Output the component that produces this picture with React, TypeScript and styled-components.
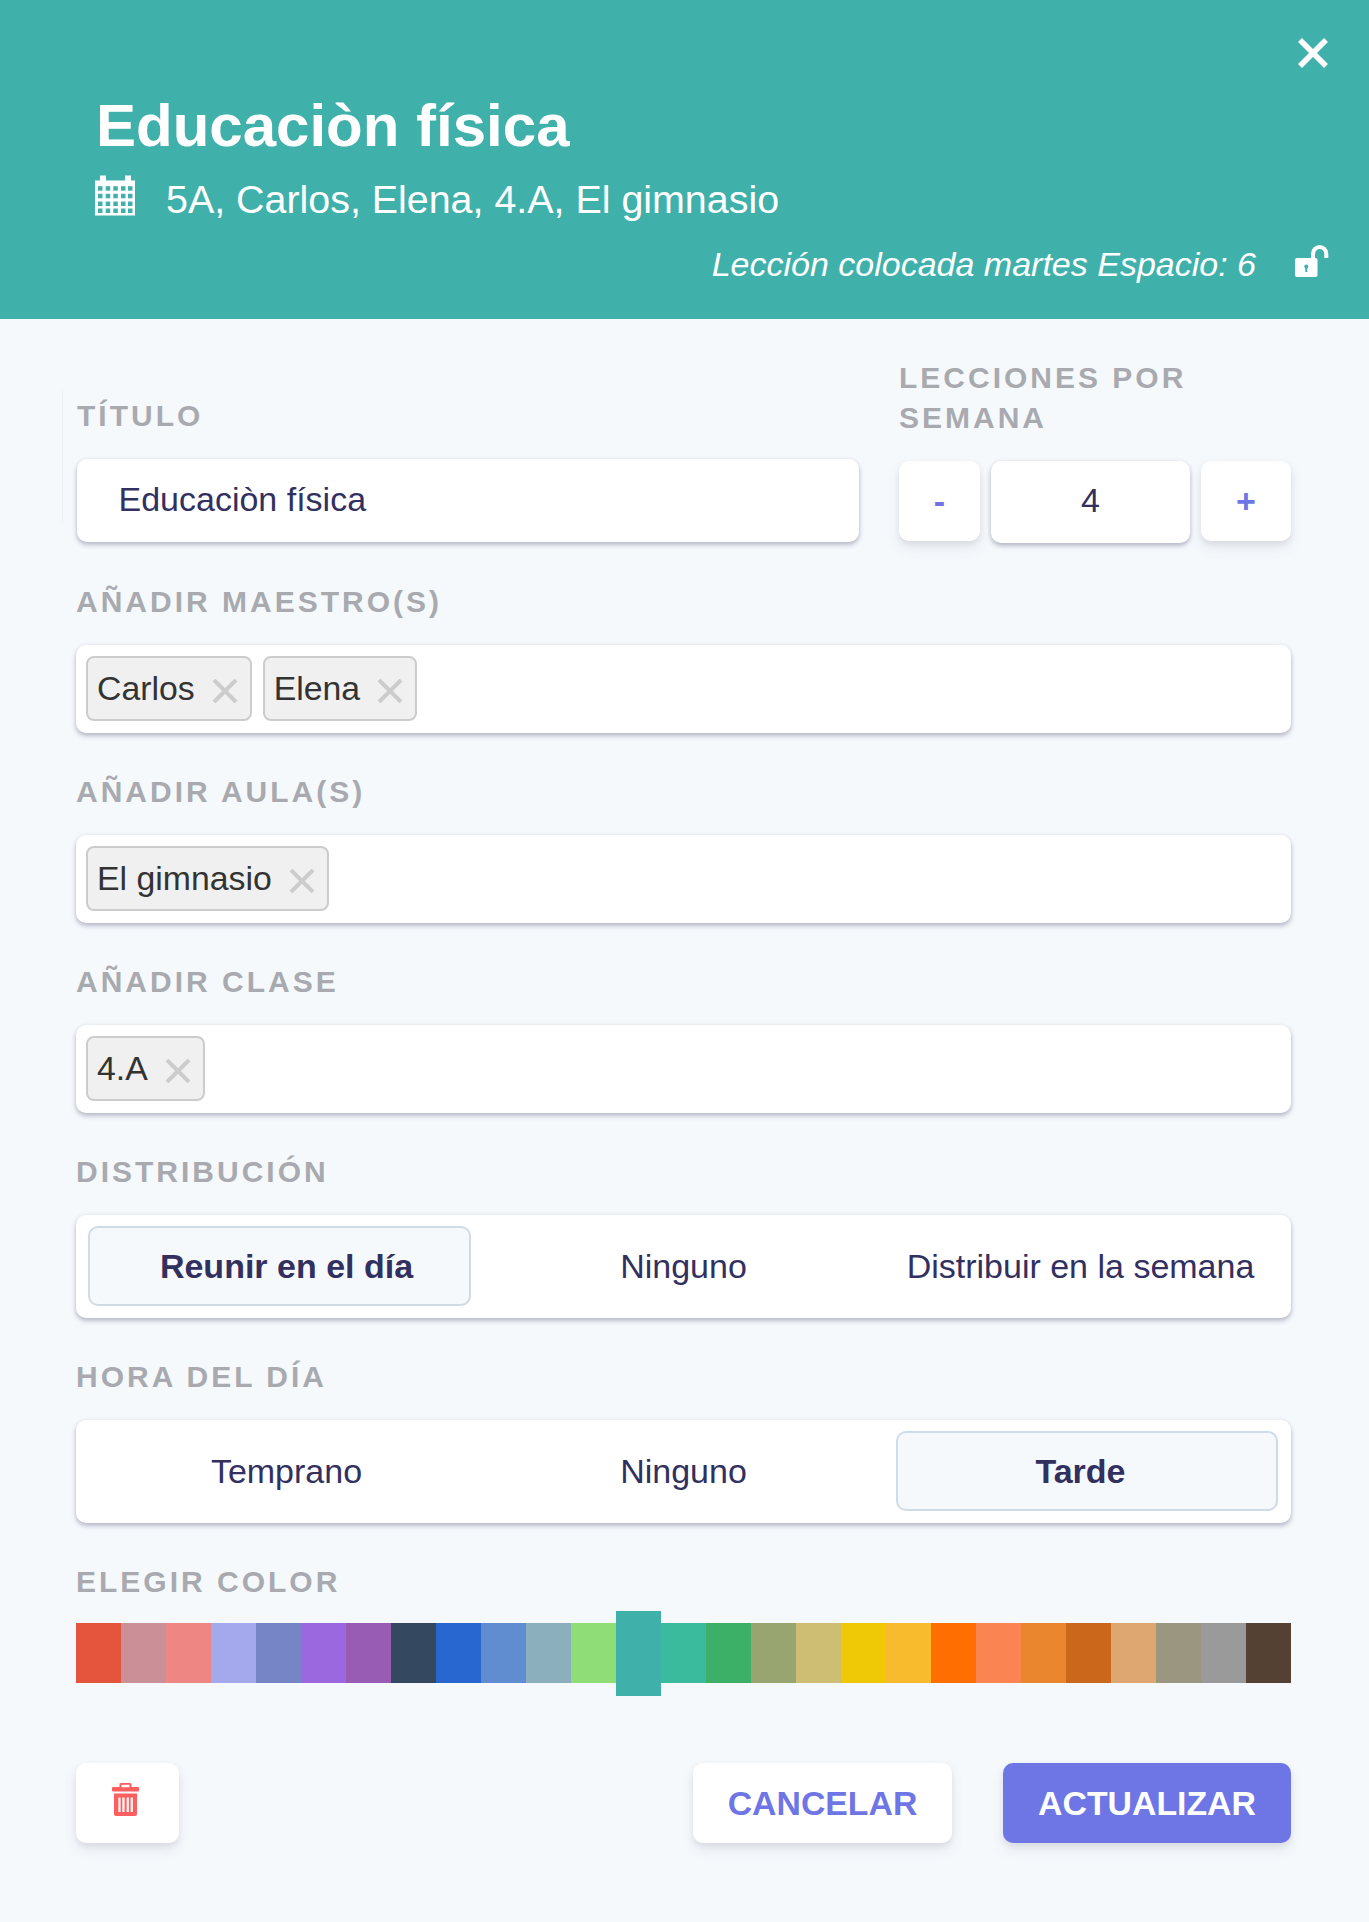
import React from "react";
import styled, { createGlobalStyle } from "styled-components";

const Global = createGlobalStyle`
  html, body { margin: 0; padding: 0; background: #f6f9fc; }
  body { font-family: "Liberation Sans", Arial, sans-serif; }
  * { box-sizing: border-box; }
`;

const softShadow = "0 7px 14px rgba(50,50,93,.09), 0 3px 6px rgba(0,0,0,.07)";
const fieldShadow = "0 3px 5px rgba(50,50,93,.3), 0 0 4px rgba(50,50,93,.08)";

const Modal = styled.div`
  width: 1369px;
  min-height: 1922px;
  background: #f6f9fc;
  color: #32305f;
`;

const Header = styled.header`
  position: relative;
  height: 319px;
  padding: 91px 40px 0 96px;
  background: #40b1aa;
  color: #fff;
`;

const CloseButton = styled.button`
  position: absolute;
  top: 38px;
  right: 40px;
  width: 32px;
  height: 30px;
  padding: 0;
  border: 0;
  background: none;
  color: #fff;
  display: block;
`;

const Title = styled.h1`
  margin: 0;
  font-size: 60px;
  font-weight: 700;
  line-height: 69px;
`;

const Subtitle = styled.div`
  margin-top: 16px;
  display: flex;
  align-items: flex-start;
  height: 46px;
  font-size: 39.4px;
  line-height: 46px;
`;

const CalendarIcon = styled.svg`
  width: 40px;
  height: 41px;
  margin: -1px 31px 0 -1px;
  flex: none;
`;

const Placed = styled.div`
  margin-top: 22px;
  display: flex;
  justify-content: flex-end;
  align-items: center;
  gap: 39px;
  height: 40px;
  font-size: 34px;
  font-style: italic;
  line-height: 40px;
`;

const LockIcon = styled.svg`
  width: 34px;
  height: 32px;
  margin-top: -6px;
  flex: none;
`;

const Body = styled.main`
  padding: 40px 78px 79px 76px;
`;

const TopRow = styled.div`
  display: flex;
  align-items: flex-start;
  gap: 40px;
  margin-bottom: 40px;
`;

const TitleField = styled.div`
  position: relative;
  width: 782px;
  margin-left: 1px;
  padding-top: 38px;

  &::before {
    content: "";
    position: absolute;
    left: -15px;
    top: 31px;
    height: 133px;
    width: 1px;
    background: #eef1f5;
  }
`;

const CountField = styled.div`
  flex: 1;
`;

const Label = styled.label<{ $gap?: number }>`
  display: block;
  margin-top: -1px;
  margin-bottom: ${(p) => (p.$gap ?? 22) + 1}px;
  font-size: 30px;
  font-weight: 700;
  line-height: 40px;
  letter-spacing: 3px;
  text-transform: uppercase;
  color: #a8aaaf;
`;

const TextInput = styled.input`
  display: block;
  width: 100%;
  height: 83px;
  padding: 0 41.5px 2px;
  border: 0;
  border-radius: 10px;
  background: #fff;
  box-shadow: ${fieldShadow};
  font: 34px "Liberation Sans", Arial, sans-serif;
  color: #32305f;
  outline: none;
`;

const Stepper = styled.div`
  display: grid;
  grid-template-columns: 81px 199px 90px;
  column-gap: 11px;
  align-items: start;
`;

const StepButton = styled.button`
  height: 80px;
  padding: 0;
  border: 0;
  border-radius: 10px;
  background: #fff;
  box-shadow: ${softShadow};
  font: 700 34px "Liberation Sans", Arial, sans-serif;
  color: #6e76e5;
`;

const CountInput = styled(TextInput)`
  height: 82px;
  padding: 0 0 3px;
  text-align: center;
`;

const Section = styled.section`
  margin-bottom: 40px;
`;

const ChipBox = styled.div`
  display: flex;
  gap: 11px;
  height: 88px;
  padding: 11px 10px;
  border-radius: 10px;
  background: #fff;
  box-shadow: ${fieldShadow};
`;

const Chip = styled.span`
  display: inline-flex;
  align-items: center;
  height: 65px;
  padding: 0 12px 0 9px;
  border: 2px solid #ccc;
  border-radius: 8px;
  background: #f0f0f0;
  font-size: 33.8px;
  color: #333;
`;

const ChipClose = styled.svg`
  width: 26px;
  height: 24px;
  margin: 4px 0 0 17px;
  color: #cccccc;
`;

const Segmented = styled.div`
  display: grid;
  grid-template-columns: repeat(3, 1fr);
  height: 103px;
  padding: 11px 12px 12px;
  border-radius: 10px;
  background: #fff;
  box-shadow: ${fieldShadow};
`;

const Option = styled.div<{ $active?: boolean; $slot: number }>`
  position: relative;
  isolation: isolate;
  display: flex;
  align-items: center;
  justify-content: center;
  font-size: 34px;
  font-weight: ${(p) => (p.$active ? 700 : 400)};
  color: #32305f;

  &::before {
    content: "";
    display: ${(p) => (p.$active ? "block" : "none")};
    position: absolute;
    z-index: -1;
    top: 0;
    bottom: 0;
    left: ${(p) => (p.$slot === 2 ? 14 : 0)}px;
    right: ${(p) => (p.$slot === 0 ? 14 : 1)}px;
    border: 2px solid #cfdbe6;
    border-radius: 10px;
    background: #f6f9fc;
  }
`;

const Palette = styled.div`
  display: grid;
  grid-template-columns: repeat(27, 45px);
  height: 60px;
`;

const Swatch = styled.div<{ $selected?: boolean; $color: string }>`
  height: ${(p) => (p.$selected ? 85 : 60)}px;
  margin-top: ${(p) => (p.$selected ? -12 : 0)}px;
  background: ${(p) => p.$color};
`;

const Footer = styled.footer`
  display: flex;
  align-items: center;
  margin-top: 80px;
`;

const TrashButton = styled.button`
  display: flex;
  align-items: center;
  justify-content: center;
  width: 103px;
  height: 80px;
  padding: 0 4px 7px 0;
  border: 0;
  border-radius: 10px;
  background: #fff;
  box-shadow: ${softShadow};
  color: #ff5e5e;
`;

const Spacer = styled.div`
  flex: 1;
`;

const ActionButton = styled.button<{ $primary?: boolean }>`
  height: 80px;
  width: ${(p) => (p.$primary ? 288 : 259)}px;
  margin-left: ${(p) => (p.$primary ? 51 : 0)}px;
  padding: 0;
  border: 0;
  border-radius: 10px;
  background: ${(p) => (p.$primary ? "#6e76e5" : "#fff")};
  box-shadow: ${softShadow};
  font: 700 33.8px "Liberation Sans", Arial, sans-serif;
  color: ${(p) => (p.$primary ? "#fff" : "#6e76e5")};
`;

const colours = [
  "#e5553e", "#cb8f97", "#ee8683", "#a4a9ed", "#7585c5", "#9c68df", "#995cb4", "#34485f", "#2767cf",
  "#608cd0", "#8cafbe", "#8edd76", "#40b1aa", "#3abb9e", "#3cb067", "#98a570", "#cebe74", "#efc806",
  "#f8bb2e", "#ff6e00", "#fa8553", "#ea872e", "#cb671a", "#dea671", "#9a9680", "#9a9a9a", "#544133",
];

const Calendar = () => {
  const xs = [3, 10.7, 18.3, 26, 33];
  const ys = [10.7, 18.3, 26, 33];
  return (
    <CalendarIcon viewBox="0 0 40 40" aria-hidden>
      <path fill="#fff" d="M0 5h5V0h6v5h19V0h6v5h4v35H0z" />
      {ys.map((y) => xs.map((x) => <rect key={`${x}-${y}`} x={x} y={y} width="4.5" height="4.5" fill="#40b1aa" />))}
    </CalendarIcon>
  );
};

const Unlock = () => (
  <LockIcon viewBox="0 0 34 32" aria-hidden>
    <rect x="0" y="13" width="22.5" height="19" rx="2" fill="#fff" />
    <path d="M18 14V8.7a6.6 6.6 0 0 1 13.3 0V13" fill="none" stroke="#fff" strokeWidth="4" />
    <circle cx="11.3" cy="21.5" r="2" fill="#40b1aa" />
    <rect x="10.3" y="22" width="2" height="5" fill="#40b1aa" />
  </LockIcon>
);

const Trash = () => (
  <svg width="27" height="33" viewBox="0 0 27 33" aria-hidden>
    <path fill="currentColor" d="M9 0h9a1.5 1.5 0 0 1 1.5 1.5V4h6.500a1 1 0 0 1 1 1v2.500a1 1 0 0 1-1 1H1a1 1 0 0 1-1-1V5a1 1 0 0 1 1-1h6.500V1.500A1.500 1.500 0 0 1 9 0z" />
    <rect x="9.500" y="1.800" width="8" height="2.400" fill="#fff" />
    <path fill="currentColor" d="M2 10.500h23V31a2 2 0 0 1-2 2H4a2 2 0 0 1-2-2z" />
    {[6.3, 10.3, 14.6, 18.6].map((x) => (
      <rect key={x} x={x} y="14.500" width="2.300" height="14.500" fill="#fff" opacity="0.92" />
    ))}
  </svg>
);

const CrossChip = () => (
  <ChipClose viewBox="0 0 26 24" aria-hidden>
    <path d="M2 1l22 22M24 1L2 23" stroke="currentColor" strokeWidth="4" fill="none" />
  </ChipClose>
);

const Chips = ({ items }: { items: string[] }) => (
  <ChipBox>
    {items.map((t) => (
      <Chip key={t}>
        {t}
        <CrossChip />
      </Chip>
    ))}
  </ChipBox>
);

const Segments = ({ items, active }: { items: string[]; active: number }) => (
  <Segmented>
    {items.map((t, i) => (
      <Option key={t} $slot={i} $active={i === active}>
        {t}
      </Option>
    ))}
  </Segmented>
);

export default function App() {
  return (
    <Modal>
      <Global />
      <Header>
        <CloseButton aria-label="Cerrar">
          <svg width="32" height="30" viewBox="0 0 32 30" aria-hidden>
            <path d="M3 2l26 26M29 2L3 28" stroke="currentColor" strokeWidth="5.500" fill="none" />
          </svg>
        </CloseButton>
        <Title>Educaciòn física</Title>
        <Subtitle>
          <Calendar />
          5A, Carlos, Elena, 4.A, El gimnasio
        </Subtitle>
        <Placed>
          <span>Lección colocada martes Espacio: 6</span>
          <Unlock />
        </Placed>
      </Header>
      <Body>
        <TopRow>
          <TitleField>
            <Label>Título</Label>
            <TextInput readOnly value="Educaciòn física" />
          </TitleField>
          <CountField>
            <Label>Lecciones por semana</Label>
            <Stepper>
              <StepButton>-</StepButton>
              <CountInput readOnly value="4" />
              <StepButton>+</StepButton>
            </Stepper>
          </CountField>
        </TopRow>
        <Section>
          <Label>Añadir maestro(s)</Label>
          <Chips items={["Carlos", "Elena"]} />
        </Section>
        <Section>
          <Label>Añadir aula(s)</Label>
          <Chips items={["El gimnasio"]} />
        </Section>
        <Section>
          <Label>Añadir clase</Label>
          <Chips items={["4.A"]} />
        </Section>
        <Section>
          <Label>Distribución</Label>
          <Segments items={["Reunir en el día", "Ninguno", "Distribuir en la semana"]} active={0} />
        </Section>
        <Section>
          <Label>Hora del día</Label>
          <Segments items={["Temprano", "Ninguno", "Tarde"]} active={2} />
        </Section>
        <Label $gap={20}>Elegir color</Label>
        <Palette>
          {colours.map((c, i) => (
            <Swatch key={c} $color={c} $selected={i === 12} />
          ))}
        </Palette>
        <Footer>
          <TrashButton aria-label="Eliminar">
            <Trash />
          </TrashButton>
          <Spacer />
          <ActionButton>CANCELAR</ActionButton>
          <ActionButton $primary>ACTUALIZAR</ActionButton>
        </Footer>
      </Body>
    </Modal>
  );
}
